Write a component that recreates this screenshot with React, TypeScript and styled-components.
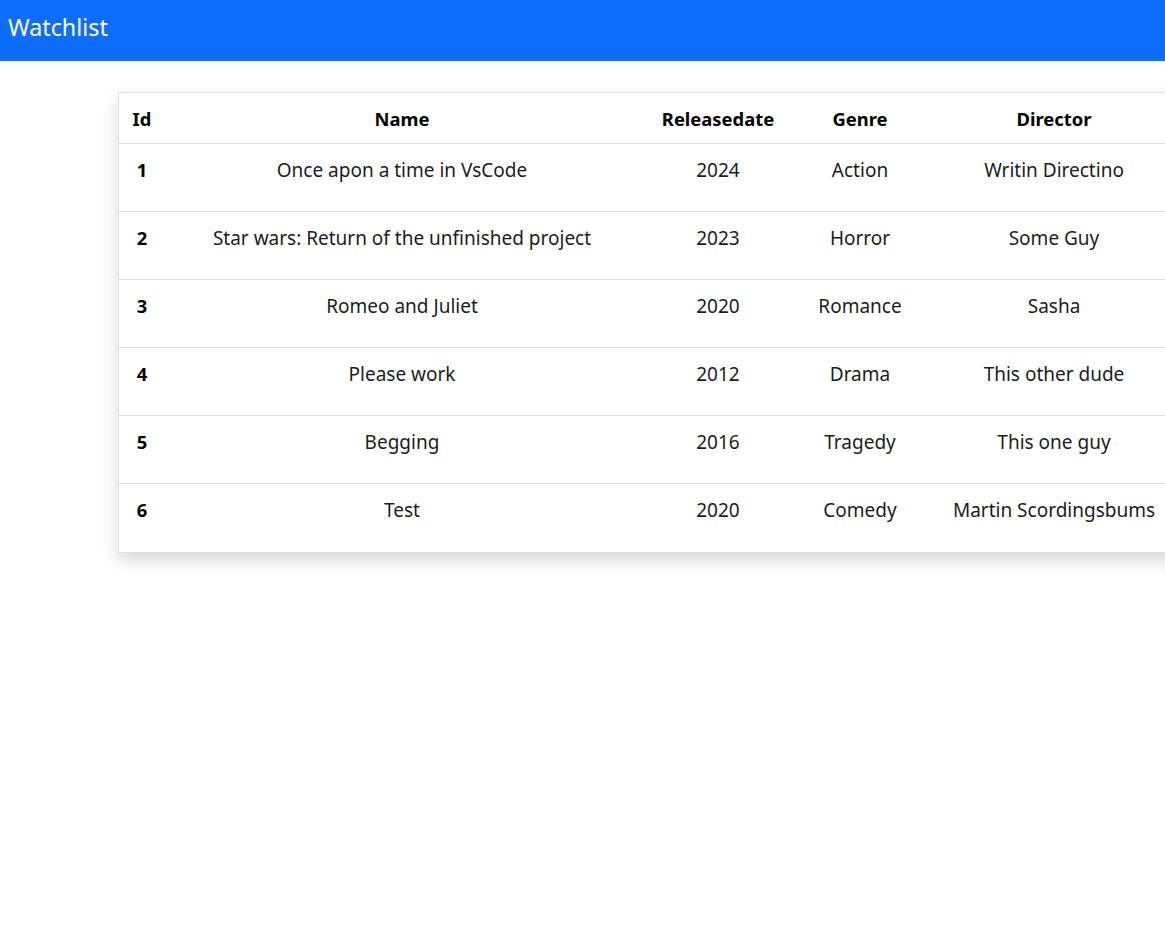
import React from "react";
import styled, { createGlobalStyle } from "styled-components";

const Global = createGlobalStyle`
  html { overflow-x: hidden; }
  html, body { margin: 0; padding: 0; background: #fff; }
  body { font-family: "Noto Sans", "Open Sans", sans-serif; color: #212529; }
`;

const Navbar = styled.header`
  height: 61px;
  background: #0d6efd;
  display: flex;
  align-items: center;
  padding: 0 8px;
  box-sizing: border-box;
`;

const Brand = styled.span`
  color: #fff;
  font-size: 23.3px;
  line-height: 1;
  margin-top: -5px;
`;

const Main = styled.main`
  padding: 31px 0 40px 118px;
`;

const Card = styled.div`
  width: 1066px;
  border: 1px solid #dee2e6;
  background: #fff;
  box-shadow: 0 8px 16px rgba(0, 0, 0, 0.15);
`;

const Table = styled.table`
  width: 100%;
  border-collapse: collapse;
  table-layout: fixed;
`;

const Th = styled.th<{ $w: number }>`
  width: ${(p) => p.$w}px;
  height: 50px;
  padding: 0;
  text-align: center;
  font-size: 18.4px;
  font-weight: 700;
  color: #000;
  border-bottom: 1px solid #dee2e6;
  vertical-align: middle;
`;

const Row = styled.tr<{ $last?: boolean }>`
  height: 68px;
  border-bottom: ${(p) => (p.$last ? "none" : "1px solid #dee2e6")};
`;

const Td = styled.td<{ $bold?: boolean }>`
  padding: 13px 0 0;
  text-align: center;
  vertical-align: top;
  white-space: nowrap;
  font-size: ${(p) => (p.$bold ? "18.4px" : "19px")};
  font-weight: ${(p) => (p.$bold ? 700 : 400)};
  color: ${(p) => (p.$bold ? "#000" : "#1a1d20")};
`;

const cols = [
  { label: "Id", w: 46 },
  { label: "Name", w: 474 },
  { label: "Releasedate", w: 158 },
  { label: "Genre", w: 126 },
  { label: "Director", w: 262 },
];

const movies = [
  { id: 1, name: "Once apon a time in VsCode", year: 2024, genre: "Action", director: "Writin Directino" },
  { id: 2, name: "Star wars: Return of the unfinished project", year: 2023, genre: "Horror", director: "Some Guy" },
  { id: 3, name: "Romeo and Juliet", year: 2020, genre: "Romance", director: "Sasha" },
  { id: 4, name: "Please work", year: 2012, genre: "Drama", director: "This other dude" },
  { id: 5, name: "Begging", year: 2016, genre: "Tragedy", director: "This one guy" },
  { id: 6, name: "Test", year: 2020, genre: "Comedy", director: "Martin Scordingsbums" },
];

export default function App() {
  return (
    <>
      <Global />
      <Navbar>
        <Brand>Watchlist</Brand>
      </Navbar>
      <Main>
        <Card>
          <Table>
            <thead>
              <tr>
                {cols.map((c) => (
                  <Th key={c.label} $w={c.w}>
                    {c.label}
                  </Th>
                ))}
              </tr>
            </thead>
            <tbody>
              {movies.map((m, i) => (
                <Row key={m.id} $last={i === movies.length - 1}>
                  <Td $bold>{m.id}</Td>
                  <Td>{m.name}</Td>
                  <Td>{m.year}</Td>
                  <Td>{m.genre}</Td>
                  <Td>{m.director}</Td>
                </Row>
              ))}
            </tbody>
          </Table>
        </Card>
      </Main>
    </>
  );
}
